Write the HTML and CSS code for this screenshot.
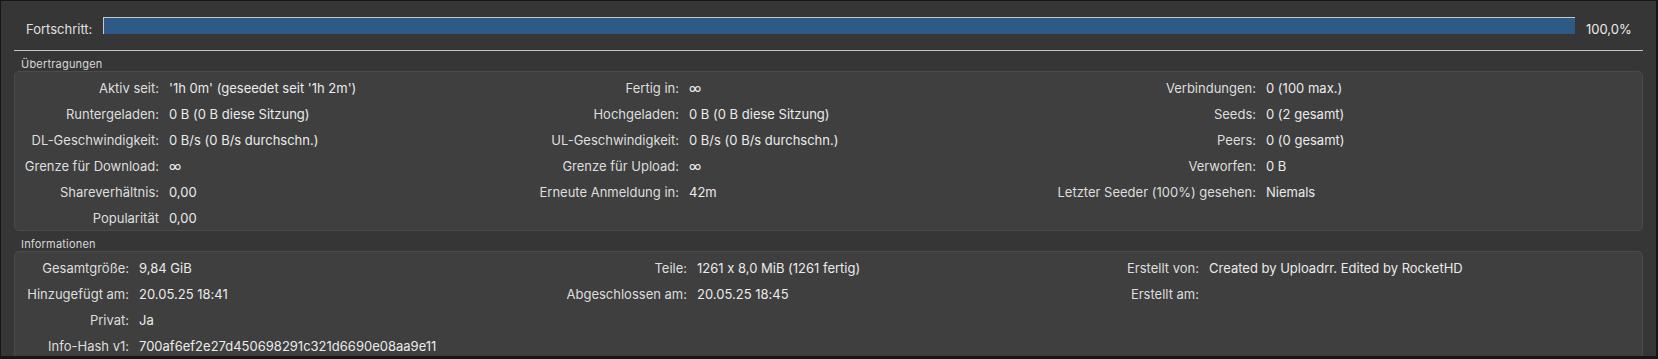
FILE: index.html
```html
<!DOCTYPE html>
<html lang="de">
<head>
    <meta charset="UTF-8">
    <meta name="viewport" content="width=device-width, initial-scale=1.0">
    <title>Torrent-Info</title>
    <link rel="stylesheet" href="styles.css">
</head>
<body>
<div class="window">
    <!-- Fortschritt -->
    <div class="progress-row">
        <span class="progress-label">Fortschritt:</span>
        <div class="progress-bar"><div class="progress-fill" style="width: 100%;"></div></div>
        <span class="progress-value">100,0%</span>
    </div>

    <div class="content">
        <div class="separator"></div>

        <!-- Übertragungen -->
        <div class="section-title">Übertragungen</div>
        <div class="box grid transfer-grid">
            <span class="label">Aktiv seit:</span><span class="value">'1h 0m' (geseedet seit '1h 2m')</span>
            <span class="label">Fertig in:</span><span class="value">∞</span>
            <span class="label">Verbindungen:</span><span class="value">0 (100 max.)</span>

            <span class="label">Runtergeladen:</span><span class="value">0 B (0 B diese Sitzung)</span>
            <span class="label">Hochgeladen:</span><span class="value">0 B (0 B diese Sitzung)</span>
            <span class="label">Seeds:</span><span class="value">0 (2 gesamt)</span>

            <span class="label">DL-Geschwindigkeit:</span><span class="value">0 B/s (0 B/s durchschn.)</span>
            <span class="label">UL-Geschwindigkeit:</span><span class="value">0 B/s (0 B/s durchschn.)</span>
            <span class="label">Peers:</span><span class="value">0 (0 gesamt)</span>

            <span class="label">Grenze für Download:</span><span class="value">∞</span>
            <span class="label">Grenze für Upload:</span><span class="value">∞</span>
            <span class="label">Verworfen:</span><span class="value">0 B</span>

            <span class="label">Shareverhältnis:</span><span class="value">0,00</span>
            <span class="label">Erneute Anmeldung in:</span><span class="value">42m</span>
            <span class="label">Letzter Seeder (100%) gesehen:</span><span class="value">Niemals</span>

            <span class="label">Popularität</span><span class="value">0,00</span>
            <span class="label"></span><span class="value"></span>
            <span class="label"></span><span class="value"></span>
        </div>

        <!-- Informationen -->
        <div class="section-title">Informationen</div>
        <div class="box grid info-grid">
            <span class="label">Gesamtgröße:</span><span class="value">9,84 GiB</span>
            <span class="label">Teile:</span><span class="value">1261 x 8,0 MiB (1261 fertig)</span>
            <span class="label">Erstellt von:</span><span class="value">Created by Uploadrr. Edited by RocketHD</span>

            <span class="label">Hinzugefügt am:</span><span class="value">20.05.25 18:41</span>
            <span class="label">Abgeschlossen am:</span><span class="value">20.05.25 18:45</span>
            <span class="label">Erstellt am:</span><span class="value"></span>

            <span class="label">Privat:</span><span class="value">Ja</span>
            <span class="label"></span><span class="value"></span>
            <span class="label"></span><span class="value"></span>

            <span class="label">Info-Hash v1:</span><span class="value">700af6ef2e27d450698291c321d6690e08aa9e11</span>
            <span class="label"></span><span class="value"></span>
            <span class="label"></span><span class="value"></span>
        </div>
    </div>
</div>
</body>
</html>
```

FILE: styles.css
```css
html, body {
    margin: 0;
    padding: 0;
    background-color: #161616;
    overflow: hidden;
}

body {
    font-family: Inter, "Noto Sans", sans-serif;
    font-size: 13px;
    font-feature-settings: "calt" 0;
    color: #e0e0e0;
}

.window {
    margin: 1px 2px 0 1px;
    height: 355px;
    background-color: #363636;
    overflow: hidden;
}

/* Fortschritt oben */
.progress-row {
    display: flex;
    align-items: center;
    gap: 11px;
    padding: 16px 25px 0 25px;
    height: 17px;
}

.progress-label,
.progress-value {
    line-height: 17px;
    padding-top: 3px;
    margin-top: 4px;
}

.progress-bar {
    flex: 1;
    height: 16px;
    border-top: 1px solid #c9c9c9;
    border-left: 1px solid #c9c9c9;
    background-color: #3a3a3a;
}

.progress-fill {
    height: 100%;
    background-color: #2d5a86;
}

.progress-value {
    width: 45px;
    color: #ececec;
}

.content {
    padding: 0 13px;
}

.separator {
    margin-top: 16px;
    height: 1px;
    background-color: #c2c2c2;
}

.section-title {
    padding: 6px 0 0 7px;
    line-height: 14px;
    font-size: 11px;
    letter-spacing: 0.2px;
    color: #d8d8d8;
}

.box {
    background-color: #3f3f3f;
    border: 1px solid #4b4b4b;
    border-radius: 5px;
    padding: 1px 0 1px 1px;
}

.grid {
    display: grid;
    grid-auto-rows: 26px;
    align-items: center;
}

.transfer-grid {
    grid-template-columns: 153px 362px 158px 367px 210px 1fr;
}

.info-grid {
    grid-template-columns: 123px 422px 136px 414px 98px 1fr;
}

.label,
.value {
    padding-top: 3px;
    white-space: nowrap;
}

.label {
    text-align: right;
    padding-right: 10px;
    color: #dedede;
}

.value {
    color: #ebebeb;
}
```
